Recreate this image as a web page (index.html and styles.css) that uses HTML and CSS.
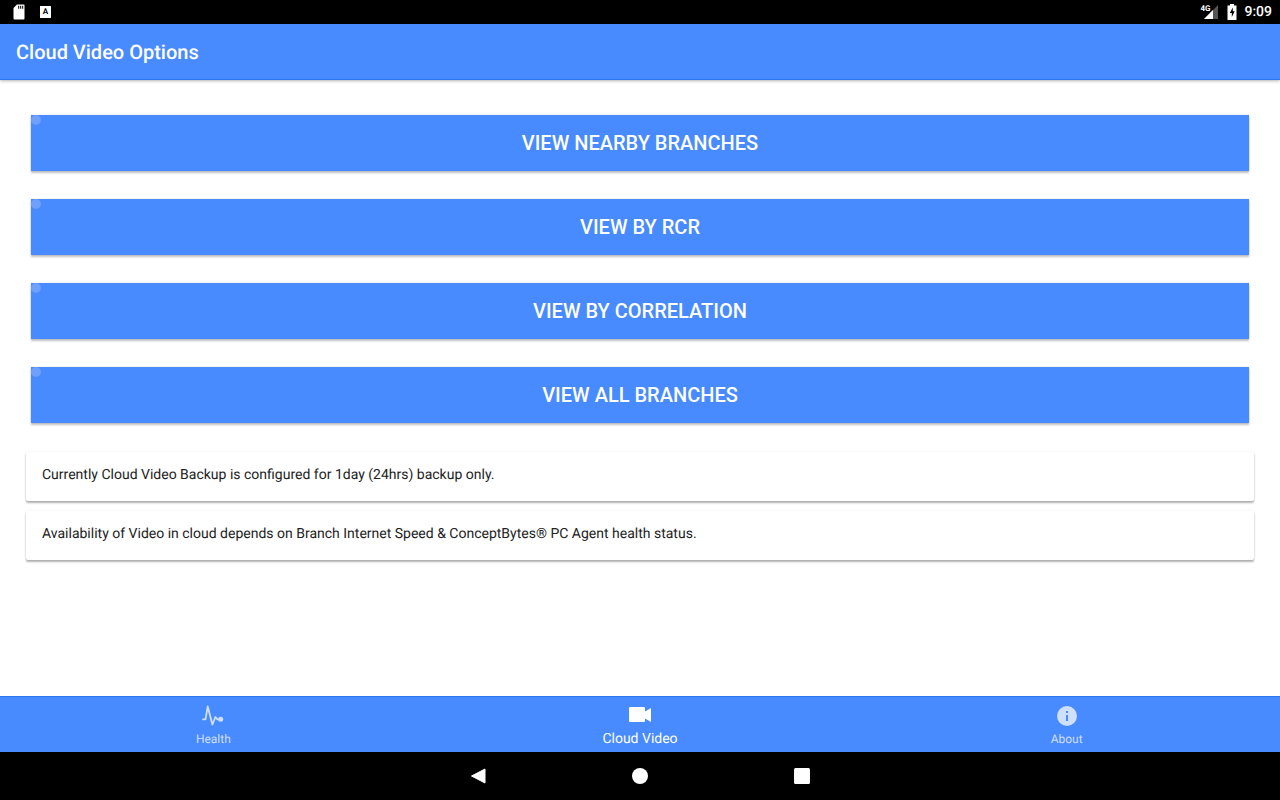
FILE: index.html
```html
<!DOCTYPE html>
<html lang="en">
<head>
    <meta charset="UTF-8">
    <meta name="viewport" content="width=device-width, initial-scale=1.0">
    <title>Cloud Video Options</title>
    <link rel="stylesheet" href="styles.css">
</head>
<body>
    <div class="status-bar">
        <div class="status-left">
            <svg width="12" height="16" viewBox="0 0 12 16"><path d="M4 0.5h6.5a1 1 0 0 1 1 1v13a1 1 0 0 1-1 1h-9a1 1 0 0 1-1-1V4z" fill="#fff"/><path d="M5.2 1.8h1v3h-1zM7.2 1.8h1v3h-1zM9.2 1.8h1v3h-1z" fill="#000"/></svg>
            <div class="sim-icon">A</div>
        </div>
        <div class="status-right">
            <span class="net-label">4G</span>
            <svg class="signal" width="17" height="16" viewBox="0 0 17 16"><path d="M16 1v14H2z" fill="#555"/><path d="M11 6v9H2z" fill="#fff"/></svg>
            <svg class="battery" width="10" height="16" viewBox="0 0 10 16"><path d="M3 0h4v1.500h2.500V16H.5V1.500H3z" fill="#fff"/><path d="M5.800 3.500 2.800 9h2v4l3-5.700h-2z" fill="#000"/></svg>
            <span class="clock">9:09</span>
        </div>
    </div>

    <header class="app-bar">Cloud Video Options</header>

    <main class="content">
        <div class="buttons">
            <button class="action-btn"><span class="ripple"></span>VIEW NEARBY BRANCHES</button>
            <button class="action-btn"><span class="ripple"></span>VIEW BY RCR</button>
            <button class="action-btn"><span class="ripple"></span>VIEW BY CORRELATION</button>
            <button class="action-btn"><span class="ripple"></span>VIEW ALL BRANCHES</button>
        </div>
        <div class="note">Currently Cloud Video Backup is configured for 1day (24hrs) backup only.</div>
        <div class="note">Availability of Video in cloud depends on Branch Internet Speed &amp; ConceptBytes® PC Agent health status.</div>
    </main>

    <nav class="tabs">
        <div class="tab">
            <svg width="24" height="24" viewBox="0 0 24 24" fill="none"><path d="M2 15.300h2.500L6.700 2.500l4.700 18 3-7.500 2 2.300H19" stroke="#cfdfff" stroke-width="1.800" stroke-linejoin="round" stroke-linecap="round"/><circle cx="19.700" cy="15.300" r="2.500" fill="#cfdfff"/></svg>
            <span>Health</span>
        </div>
        <div class="tab active">
            <svg width="24" height="24" viewBox="0 0 24 24"><path d="M2 3h14a1 1 0 0 1 1 1v3.500L23 4v14l-6-3.500V17a1 1 0 0 1-1 1H2a1 1 0 0 1-1-1V4a1 1 0 0 1 1-1z" fill="#fff"/></svg>
            <span>Cloud Video</span>
        </div>
        <div class="tab">
            <svg width="24" height="24" viewBox="0 0 24 24"><circle cx="12" cy="12" r="10" fill="#cfdfff"/><path d="M11 11h2v6h-2zM11 7h2v2h-2z" fill="#488aff"/></svg>
            <span>About</span>
        </div>
    </nav>

    <div class="nav-bar">
        <svg width="16" height="16" viewBox="0 0 16 16"><path d="M15 1v14L1.500 8z" fill="#fff" stroke="#fff" stroke-linejoin="round"/></svg>
        <svg width="16" height="16" viewBox="0 0 16 16"><circle cx="8" cy="8" r="8" fill="#fff"/></svg>
        <svg width="16" height="16" viewBox="0 0 16 16"><rect width="16" height="16" rx="1.500" fill="#fff"/></svg>
    </div>
</body>
</html>
```

FILE: styles.css
```css
* {
    box-sizing: border-box;
}
html, body {
    height: 100%;
}
body {
    margin: 0;
    height: 800px;
    overflow: hidden;
    display: flex;
    flex-direction: column;
    font-family: Roboto, "Liberation Sans", sans-serif;
    background-color: #fff;
    text-rendering: geometricPrecision;
}
.status-bar {
    height: 24px;
    flex-shrink: 0;
    background-color: #000;
    color: #fff;
    display: flex;
    justify-content: space-between;
    align-items: center;
    padding: 0 8px 0 13px;
}
.status-left {
    display: flex;
    align-items: center;
    gap: 15px;
}
.sim-icon {
    width: 11px;
    height: 12px;
    background-color: #fff;
    color: #000;
    font-size: 8px;
    font-weight: 700;
    line-height: 11px;
    text-align: center;
}
.status-right {
    display: flex;
    align-items: center;
}
.net-label {
    font-size: 8px;
    font-weight: 700;
    margin-right: -8px;
    margin-top: -8px;
}
.signal {
    margin-right: 8px;
}
.battery {
    margin-right: 7px;
}
.clock {
    font-size: 14px;
    font-weight: 500;
}
.app-bar {
    height: 56px;
    flex-shrink: 0;
    background-color: #488aff;
    border-bottom: 1px solid #2d79f5;
    color: #fff;
    font-size: 20px;
    font-weight: 500;
    line-height: 56px;
    padding-left: 16px;
    box-shadow: 0 1px 3px rgba(0, 0, 0, 0.3);
    position: relative;
}
.content {
    flex: 1;
    padding: 35px 26px 0;
}
.buttons {
    display: flex;
    flex-direction: column;
    gap: 28px;
    padding: 0 5px;
    margin-bottom: 29px;
}
.action-btn {
    position: relative;
    height: 56px;
    border: none;
    background-color: #488aff;
    color: #fff;
    font-family: inherit;
    font-size: 20px;
    font-weight: 500;
    box-shadow: 0 2px 2px rgba(0, 0, 0, 0.24), 0 0 2px rgba(0, 0, 0, 0.12);
    overflow: hidden;
}
.ripple {
    position: absolute;
    left: 0;
    top: 0;
    width: 10px;
    height: 10px;
    border-radius: 50%;
    background-color: #6f9fff;
}
.note {
    height: 49px;
    margin-bottom: 10px;
    padding-left: 16px;
    font-size: 14px;
    line-height: 47px;
    color: #222;
    background-color: #fff;
    border-radius: 2px;
    box-shadow: 0 2px 2px rgba(0, 0, 0, 0.3), 0 0 2px rgba(0, 0, 0, 0.08);
}
.tabs {
    height: 56px;
    flex-shrink: 0;
    background-color: #488aff;
    border-top: 1px solid #2d79f5;
    display: flex;
}
.tab {
    flex: 1;
    display: flex;
    flex-direction: column;
    align-items: center;
    padding-top: 7px;
    color: #cfdfff;
    font-size: 12px;
}
.tab span {
    margin-top: 4px;
    line-height: 14px;
}
.tab.active {
    color: #fff;
    font-size: 14px;
}
.nav-bar {
    height: 48px;
    flex-shrink: 0;
    background-color: #000;
    display: flex;
    justify-content: center;
    align-items: center;
    gap: 146px;
}
```
